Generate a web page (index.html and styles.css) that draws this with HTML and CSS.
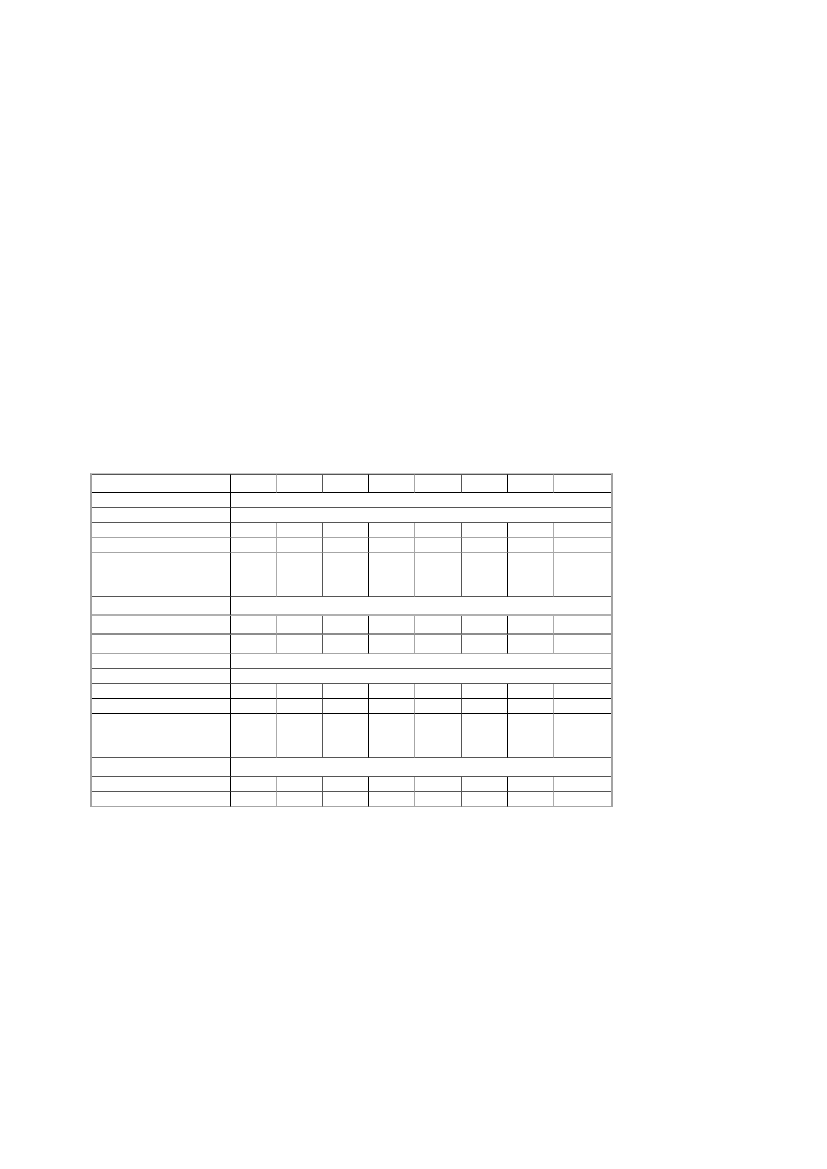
FILE: index.html
```html
<!DOCTYPE html>
<html>
<head>
<meta charset="utf-8">
<link rel="stylesheet" href="styles.css">
</head>
<body>
<table class="grid">
  <colgroup>
    <col class="w1"><col class="w2"><col class="w2"><col class="w2"><col class="w2"><col class="w3"><col class="w2"><col class="w2"><col class="w4">
  </colgroup>
  <tr class="h19 bk"><td class="c1"></td><td class="c2"></td><td class="c3"></td><td class="c4"></td><td class="c5"></td><td class="c6"></td><td class="c7"></td><td class="c8"></td><td></td></tr>
  <tr class="h15 dk"><td class="c1"></td><td colspan="8"></td></tr>
  <tr class="h15 dk"><td class="c1"></td><td colspan="8"></td></tr>
  <tr class="h15 lt"><td class="c1"></td><td class="c2"></td><td class="c3"></td><td class="c4"></td><td class="c5"></td><td class="c6"></td><td class="c7"></td><td class="c8"></td><td></td></tr>
  <tr class="h15 lt"><td class="c1"></td><td class="c2"></td><td class="c3"></td><td class="c4"></td><td class="c5"></td><td class="c6"></td><td class="c7"></td><td class="c8"></td><td></td></tr>
  <tr class="h44 dk"><td class="c1"></td><td class="c2"></td><td class="c3"></td><td class="c4"></td><td class="c5"></td><td class="c6"></td><td class="c7"></td><td class="c8"></td><td></td></tr>
  <tr class="h19 lt2"><td class="c1"></td><td colspan="8"></td></tr>
  <tr class="h19 md"><td class="c1"></td><td class="c2"></td><td class="c3"></td><td class="c4"></td><td class="c5"></td><td class="c6"></td><td class="c7"></td><td class="c8"></td><td></td></tr>
  <tr class="h19 lt"><td class="c1"></td><td class="c2"></td><td class="c3"></td><td class="c4"></td><td class="c5"></td><td class="c6"></td><td class="c7"></td><td class="c8"></td><td></td></tr>
  <tr class="h15 dk"><td class="c1"></td><td colspan="8"></td></tr>
  <tr class="h15 dk"><td class="c1"></td><td colspan="8"></td></tr>
  <tr class="h15 bk"><td class="c1"></td><td class="c2"></td><td class="c3"></td><td class="c4"></td><td class="c5"></td><td class="c6"></td><td class="c7"></td><td class="c8"></td><td></td></tr>
  <tr class="h15 bk"><td class="c1"></td><td class="c2"></td><td class="c3"></td><td class="c4"></td><td class="c5"></td><td class="c6"></td><td class="c7"></td><td class="c8"></td><td></td></tr>
  <tr class="h44 dk"><td class="c1"></td><td class="c2"></td><td class="c3"></td><td class="c4"></td><td class="c5"></td><td class="c6"></td><td class="c7"></td><td class="c8"></td><td></td></tr>
  <tr class="h19 dk"><td class="c1"></td><td colspan="8"></td></tr>
  <tr class="h15 dk"><td class="c1"></td><td class="c2"></td><td class="c3"></td><td class="c4"></td><td class="c5"></td><td class="c6"></td><td class="c7"></td><td class="c8"></td><td></td></tr>
  <tr class="h15 lt"><td class="c1"></td><td class="c2"></td><td class="c3"></td><td class="c4"></td><td class="c5"></td><td class="c6"></td><td class="c7"></td><td class="c8"></td><td></td></tr>
</table>
</body>
</html>
```
FILE: styles.css
```css
html, body {
  margin: 0;
  padding: 0;
  background: #ffffff;
  font-family: "Liberation Sans", Arial, sans-serif;
}

.grid {
  margin: 473px 0 0 90px;
  border-collapse: separate;
  border-spacing: 0;
  table-layout: fixed;
  width: 523px;
  border-left: 2px solid #a3a3a3;
  border-right: 2px solid #a3a3a3;
  border-top: 1px solid #c4c4c4;
}

.grid tr:first-child td {
  border-top: 1px solid #555555;
}

.w1 { width: 139px; }
.w2 { width: 46px; }
.w3 { width: 47px; }
.w4 { width: 57px; }

.grid td {
  padding: 0;
  box-sizing: border-box;
}

.h15 { height: 15px; }
.h18 { height: 18px; }
.h19 { height: 19px; }
.h44 { height: 44px; }

.bk td { border-bottom: 1px solid #000000; }
.dk td { border-bottom: 1px solid #555555; }
.md td { border-bottom: 2px solid #8c8c8c; }
.lt td { border-bottom: 1px solid #a6a6a6; }
.lt2 td { border-bottom: 2px solid #b0b0b0; }

.c1 { border-right: 1px solid #000000; }
.c2 { border-right: 1px solid #ababab; }
.c3 { border-right: 1px solid #555555; }
.c4 { border-right: 1px solid #000000; }
.c5 { border-right: 1px solid #a6a6a6; }
.c6 { border-right: 1px solid #555555; }
.c7 { border-right: 1px solid #000000; }
.c8 { border-right: 1px solid #ababab; }
```
